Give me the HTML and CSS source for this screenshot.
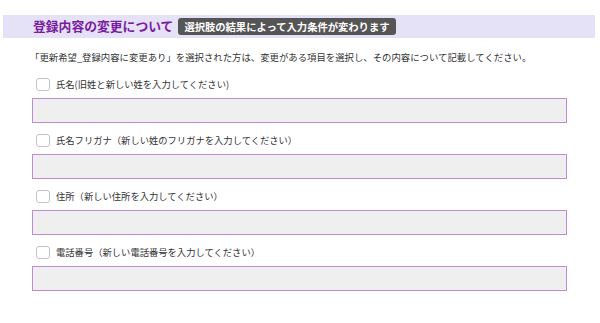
FILE: index.html
```html
<!DOCTYPE html>
<html lang="ja">
<head>
  <meta charset="UTF-8">
  <title>登録内容の変更について</title>
  <link rel="stylesheet" href="styles.css">
</head>
<body>
  <div class="head">
    <h2 class="title">登録内容の変更について</h2>
    <span class="badge">選択肢の結果によって入力条件が変わります</span>
  </div>
  <p class="lead">「更新希望_登録内容に変更あり」を選択された方は、変更がある項目を選択し、その内容について記載してください。</p>
  <form class="items">
    <div class="item">
      <label class="check"><input type="checkbox"> 氏名(旧姓と新しい姓を入力してください)</label>
      <input type="text" class="field">
    </div>
    <div class="item">
      <label class="check"><input type="checkbox"> 氏名フリガナ（新しい姓のフリガナを入力してください）</label>
      <input type="text" class="field">
    </div>
    <div class="item">
      <label class="check"><input type="checkbox"> 住所（新しい住所を入力してください）</label>
      <input type="text" class="field">
    </div>
    <div class="item">
      <label class="check"><input type="checkbox"> 電話番号（新しい電話番号を入力してください）</label>
      <input type="text" class="field">
    </div>
  </form>
</body>
</html>
```

FILE: styles.css
```css
body { margin: 0; font-family: "Noto Sans CJK JP", "Noto Sans", sans-serif; color: #333; background: #fff;}
.head { margin: 15px 5px 0 3px; height: 23px; background: #e5e1f7; display: flex; align-items: center; padding-left: 30px; gap: 5px;}
.title { margin: 0; font-size: 12.8px; font-weight: 700; color: #7a1c9e; line-height: 1;}
.badge { background: #555; color: #fff; font-size: 10.3px; font-weight: 700; line-height: 17px; padding: 0 6px; border-radius: 3px;}
.lead { margin: 12px 0 0 30px; font-size: 9.4px; line-height: 14px;}
.items { margin: 13px 33px 0 32px; display: flex; flex-direction: column; gap: 10px;}
.item { display: flex; flex-direction: column; gap: 7px;}
.check { display: flex; align-items: center; gap: 6px; padding-left: 4px; font-size: 9.3px; line-height: 14px;}
.check input { appearance: none; margin: 0; width: 14px; height: 13px; border: 1px solid #c4c4c4; border-radius: 3px; background: #fff;}
.field { box-sizing: border-box; height: 25px; width: 100%; margin: 0; border: 1px solid #bf8bd4; background: #efefef; padding: 0 8px;}
```
